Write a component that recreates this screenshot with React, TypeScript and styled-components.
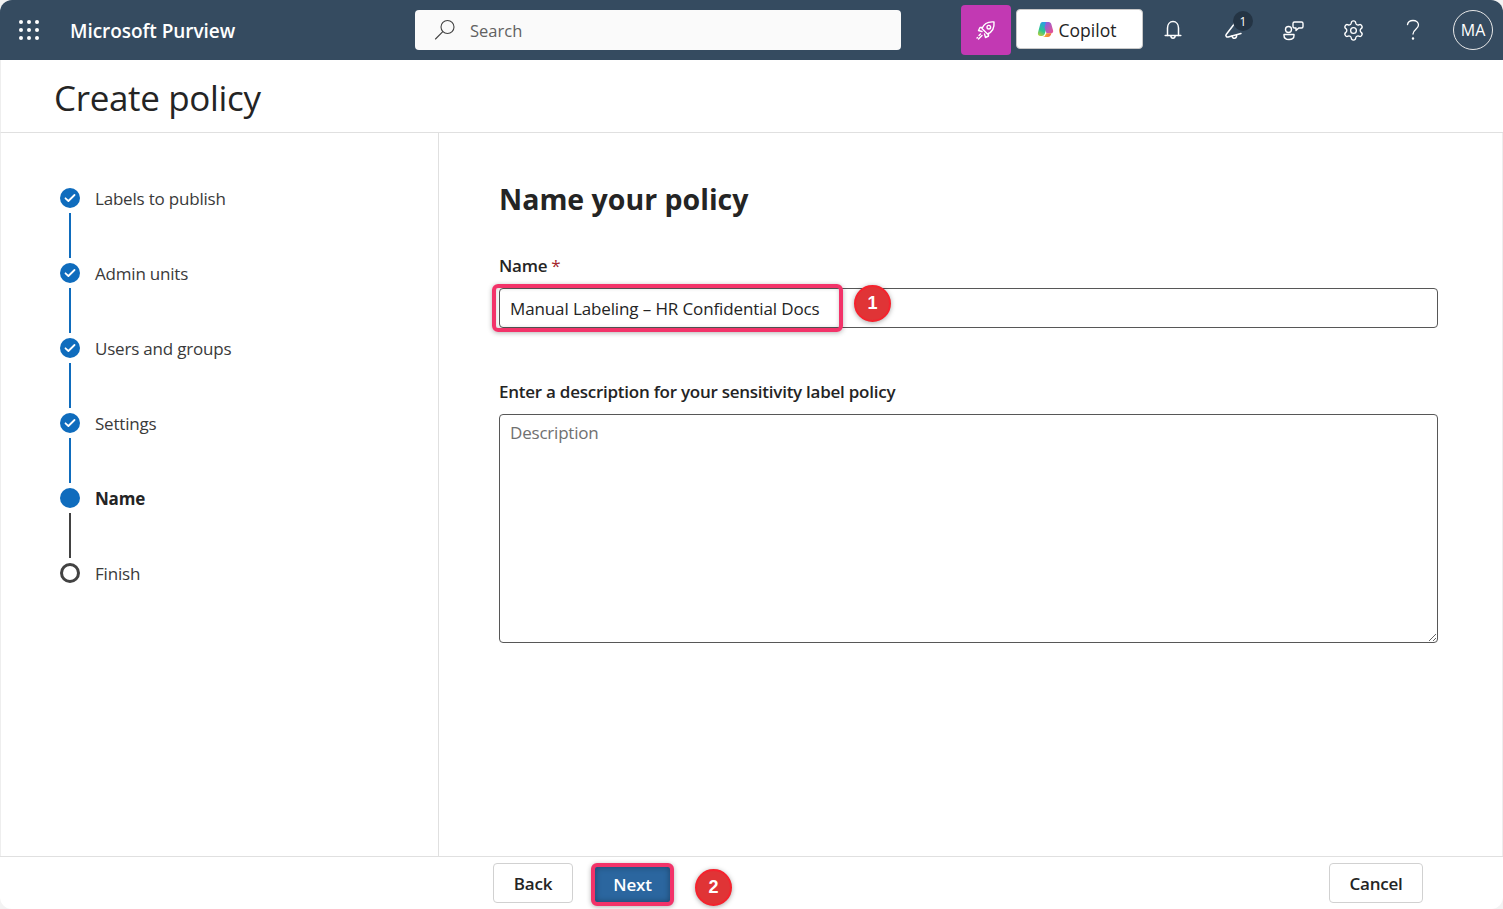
import { ReactNode } from 'react';
import { Settings } from 'lucide-react';
import styled, { createGlobalStyle } from 'styled-components';

const FONT = '"Open Sans", "Noto Sans", "Liberation Sans", sans-serif';

const GlobalStyle = createGlobalStyle`
  html, body {
    margin: 0;
    padding: 0;
    height: 100%;
    background: #f3f3f3;
    overflow: hidden;
  }
  * {
    box-sizing: border-box;
  }
`;

const STEPS = [
  { label: 'Labels to publish', state: 'done' },
  { label: 'Admin units', state: 'done' },
  { label: 'Users and groups', state: 'done' },
  { label: 'Settings', state: 'done' },
  { label: 'Name', state: 'current' },
  { label: 'Finish', state: 'todo' },
] as const;

type StepState = (typeof STEPS)[number]['state'];

const WaffleIcon = () => (
  <svg width="20" height="20" viewBox="0 0 20 20" fill="#fff">
    {[2, 10, 18].map((y) =>
      [2, 10, 18].map((x) => <circle key={`${x}-${y}`} cx={x} cy={y} r="2" />),
    )}
  </svg>
);

const SearchIcon = () => (
  <svg width="22" height="22" viewBox="0 0 22 22" fill="none" stroke="#424242" strokeWidth="1.1">
    <circle cx="13.5" cy="8" r="6.5" />
    <path d="M8.8 12.6 1.5 20" strokeLinecap="round" />
  </svg>
);

const RocketIcon = () => (
  <svg width="20" height="20" viewBox="0 0 20 20" fill="none" stroke="#fff" strokeWidth="1.4" strokeLinecap="round" strokeLinejoin="round">
    <path d="M6 8.500C8 3.500 12.500 1.500 18 2c.5 5.500-1.500 10-6.500 12L6 8.500Z" />
    <circle cx="12.800" cy="7.200" r="1.800" />
    <path d="M6.500 7.500H4L2.500 10.500 6 11.500M12.500 13.500V16l-3 1.500-1-3.500" />
    <path d="M4.500 14 3 15.500M6 15.500 2.500 19M1.500 17.500l-.5.500" />
  </svg>
);

const CopilotIcon = () => (
  <svg width="17" height="17" viewBox="0 0 17 17">
    <defs>
      <linearGradient id="copilotBlue" x1="0.6" y1="0" x2="0.2" y2="1">
        <stop offset="0" stopColor="#2f9bea" />
        <stop offset="0.6" stopColor="#2bc48f" />
        <stop offset="1" stopColor="#b6d13c" />
      </linearGradient>
      <linearGradient id="copilotPink" x1="0" y1="0" x2="1" y2="1">
        <stop offset="0" stopColor="#7a63e8" />
        <stop offset="1" stopColor="#f0508c" />
      </linearGradient>
      <linearGradient id="copilotOrange" x1="0" y1="0" x2="1" y2="0">
        <stop offset="0" stopColor="#f7c531" />
        <stop offset="1" stopColor="#ef6a3c" />
      </linearGradient>
    </defs>
    <path d="M5.500 1h6L8 12c-.5 1.800-1.500 3-3.300 3H3.500C1.500 15 .5 13.500 1 11.500L3 4c.4-1.800 1.200-3 2.500-3Z" fill="url(#copilotBlue)" />
    <path d="M9 1h2.500c1.700 0 2.500 1 3 2.800l1.600 5.700c.4 1.500-.5 2.700-2 2.700H9.500L7.500 6.500 9 1Z" fill="url(#copilotPink)" />
    <path d="M4.500 16h6.300c2 0 3-1.500 3.700-3.800H9.300L7.800 15c-.5.800-1.700 1-3.300 1Z" fill="url(#copilotOrange)" />
  </svg>
);

const BellIcon = () => (
  <svg width="18" height="20" viewBox="0 0 18 20" fill="none" stroke="#fff" strokeWidth="1.5" strokeLinecap="round" strokeLinejoin="round">
    <path d="M3.500 15.500V8c0-3.700 2.300-6.500 5.500-6.500s5.500 2.800 5.500 6.500v7.500" />
    <path d="M1.200 15.500h15.600" />
    <path d="M6.800 15.800c.2 1.500 1 2.400 2.200 2.400s2-.9 2.200-2.400" />
  </svg>
);

const MegaphoneIcon = () => (
  <svg width="19" height="19" viewBox="0 0 19 19" fill="none" stroke="#fff" strokeWidth="1.5" strokeLinecap="round" strokeLinejoin="round">
    <path d="M11 2 2.200 13.500c-.6.800-.4 1.500.2 2.100.5.500 1 .6 1.800.4L17 12.500" />
    <path d="M8 15c.3 1.600 1.400 2.500 2.800 2.200 1.300-.3 2-1.400 1.700-3" />
  </svg>
);

const CommunityIcon = () => (
  <svg width="21" height="21" viewBox="0 0 21 21" fill="none" stroke="#fff" strokeWidth="1.4" strokeLinejoin="round">
    <circle cx="5.500" cy="9.500" r="3" />
    <path d="M1 14.500h10v1c0 2.500-2.200 4-5 4s-5-1.500-5-4v-1Z" />
    <path d="M11.500 2h7c1 0 1.500.6 1.500 1.500v3c0 .9-.5 1.500-1.500 1.500h-2.800L13 10.500V8h-1.500C10.500 8 10 7.400 10 6.500v-3c0-.9.500-1.500 1.500-1.500Z" />
  </svg>
);

const HelpIcon = () => (
  <svg width="16" height="22" viewBox="0 0 16 22" fill="none" stroke="#fff" strokeWidth="1.3" strokeLinecap="round">
    <path d="M2.500 5.500C3 3 5 1.500 8 1.500c3.200 0 5.500 2 5.500 4.500 0 4-5.500 4.500-5.500 9" />
    <circle cx="8" cy="19.500" r="0.6" fill="#fff" />
  </svg>
);

const CheckIcon = () => (
  <svg width="12" height="10" viewBox="0 0 12 10" fill="none" stroke="#fff" strokeWidth="1.8" strokeLinecap="round" strokeLinejoin="round">
    <path d="M1.500 5.300 4.400 8 10.500 2" />
  </svg>
);

const Frame = styled.div`
  width: 1503px;
  height: 909px;
  display: flex;
  flex-direction: column;
  background: #fff;
  border-radius: 12px;
  overflow: hidden;
  font-family: ${FONT};
  color: #242424;
`;

const TopBar = styled.header`
  height: 60px;
  flex: none;
  display: flex;
  align-items: center;
  background: #354b60;
  padding-left: 19px;
`;

const Waffle = styled.div`
  width: 21px;
  display: flex;
`;

const Brand = styled.div`
  margin: 2px 0 0 30px;
  width: 345px;
  font-size: 19px;
  font-weight: 600;
  letter-spacing: -0.05px;
  color: #fff;
`;

const SearchBox = styled.div`
  width: 486px;
  height: 40px;
  display: flex;
  align-items: center;
  gap: 14px;
  padding-left: 19px;
  background: #fafafa;
  border-radius: 4px;
  font-size: 16.5px;
  color: #616161;
`;

const RocketButton = styled.div`
  width: 50px;
  height: 50px;
  margin-left: 60px;
  display: flex;
  align-items: center;
  justify-content: center;
  background: #c239b3;
  border-radius: 4px;
`;

const CopilotButton = styled.div`
  width: 127px;
  height: 40px;
  margin: 0 0 2px 5px;
  padding: 1px 6px 0 0;
  display: flex;
  align-items: center;
  justify-content: center;
  gap: 5px;
  background: #fff;
  border: 1px solid #c8c8c8;
  border-radius: 4px;
  font-size: 17.5px;
  color: #242424;
`;

const IconRow = styled.div`
  display: flex;
  align-items: center;
`;

const IconSlot = styled.div`
  position: relative;
  width: 60px;
  height: 40px;
  display: flex;
  align-items: center;
  justify-content: center;
  color: #fff;
`;

const Badge = styled.span`
  position: absolute;
  top: 1px;
  left: 30px;
  width: 20px;
  height: 20px;
  display: flex;
  align-items: center;
  justify-content: center;
  border-radius: 50%;
  background: #243444;
  font-size: 12px;
  color: #fff;
`;

const Avatar = styled.div`
  width: 40px;
  height: 40px;
  margin-left: 10px;
  display: flex;
  align-items: center;
  justify-content: center;
  border: 1px solid #e8e8e8;
  border-radius: 50%;
  font-size: 16px;
  color: #fff;
`;

const TitleBar = styled.div`
  height: 73px;
  flex: none;
  display: flex;
  align-items: center;
  padding: 2px 0 0 54px;
  border-bottom: 1px solid #e0e0e0;
  border-left: 1px solid #eeeeee;
`;

const Title = styled.h1`
  margin: 0 0 0 -1px;
  font-size: 35px;
  font-weight: 500;
  letter-spacing: -0.35px;
  color: #242424;
`;

const Body = styled.div`
  flex: 1;
  min-height: 0;
  display: flex;
  border-left: 1px solid #eeeeee;
  border-right: 1px solid #eeeeee;
`;

const Sidebar = styled.nav`
  width: 438px;
  flex: none;
  padding: 56px 0 0 59px;
  border-right: 1px solid #e0e0e0;
`;

const StepRow = styled.div<{ $last?: boolean }>`
  height: ${(p) => (p.$last ? '20px' : '75px')};
  display: flex;
  gap: 15px;
`;

const Rail = styled.div`
  width: 20px;
  margin-top: -1px;
  display: flex;
  flex-direction: column;
  align-items: center;
`;

const Dot = styled.div<{ $state: StepState }>`
  width: 20px;
  height: 20px;
  flex: none;
  display: flex;
  align-items: center;
  justify-content: center;
  border-radius: 50%;
  background: ${(p) => (p.$state === 'todo' ? '#fff' : '#0f6cbd')};
  border: ${(p) => (p.$state === 'todo' ? '3px solid #424242' : 'none')};
`;

const Connector = styled.div<{ $dark: boolean }>`
  width: 2px;
  height: 45px;
  margin-top: 5px;
  background: ${(p) => (p.$dark ? '#424242' : '#0f6cbd')};
`;

const StepLabel = styled.span<{ $current: boolean }>`
  font-size: 17px;
  line-height: 20px;
  letter-spacing: -0.2px;
  font-weight: ${(p) => (p.$current ? 700 : 400)};
  color: ${(p) => (p.$current ? '#242424' : '#3a3a3a')};
`;

const Main = styled.main`
  flex: 1;
  padding: 46px 64px 0 60px;
`;

const Heading = styled.h2`
  margin: 0 0 36px;
  font-size: 28.5px;
  line-height: 40px;
  font-weight: 700;
  color: #242424;
`;

const FieldLabel = styled.label`
  display: block;
  margin-bottom: 11px;
  font-size: 17px;
  line-height: 22px;
  font-weight: 600;
  letter-spacing: -0.25px;
  color: #242424;
`;

const Required = styled.span`
  color: #a4262c;
  font-weight: 400;
`;

const InputWrap = styled.div`
  position: relative;
  margin-bottom: 53px;
`;

const NameInput = styled.input`
  display: block;
  width: 100%;
  height: 40px;
  padding: 0 10px;
  border: 1px solid #575757;
  border-radius: 4px;
  background: #fff;
  font-family: ${FONT};
  font-size: 17px;
  letter-spacing: -0.12px;
  color: #242424;
  outline: none;
`;

const Highlight = styled.span`
  position: absolute;
  left: -7px;
  top: -4px;
  width: 351px;
  height: 48px;
  border: 4px solid #f23369;
  border-radius: 6px;
  box-shadow: 0 1px 5px rgba(0, 0, 0, 0.3), inset 0 0 4px rgba(0, 0, 0, 0.2);
  pointer-events: none;
`;

const Marker = styled.span`
  position: absolute;
  width: 37px;
  height: 37px;
  display: flex;
  align-items: center;
  justify-content: center;
  border: 2px solid #f5222d;
  border-radius: 50%;
  background: #e03436;
  box-shadow: 0 1px 5px rgba(0, 0, 0, 0.35);
  font-family: "Liberation Sans", sans-serif;
  font-size: 18px;
  font-weight: 700;
  color: #fff;
`;

const NameMarker = styled(Marker)`
  left: 355px;
  top: -3px;
`;

const DescriptionInput = styled.textarea`
  display: block;
  width: 100%;
  height: 229px;
  padding: 7px 10px;
  border: 1px solid #575757;
  border-radius: 4px;
  background: #fff;
  font-family: ${FONT};
  font-size: 17px;
  line-height: 22px;
  letter-spacing: -0.2px;
  color: #242424;
  outline: none;
  resize: vertical;

  &::placeholder {
    color: #707070;
    opacity: 1;
  }
`;

const Footer = styled.footer`
  height: 53px;
  flex: none;
  display: flex;
  align-items: flex-start;
  padding: 6px 80px 0 493px;
  border-top: 1px solid #e0e0e0;
`;

const FooterButton = styled.button`
  height: 40px;
  padding: 0;
  border: 1px solid #d1d1d1;
  border-radius: 4px;
  background: #fff;
  font-family: ${FONT};
  font-size: 17px;
  font-weight: 600;
  letter-spacing: -0.2px;
  color: #242424;
`;

const BackButton = styled(FooterButton)`
  width: 80px;
`;

const CancelButton = styled(FooterButton)`
  width: 94px;
  margin-left: auto;
`;

const NextWrap = styled.div`
  position: relative;
  margin-left: 18px;
`;

const NextButton = styled(FooterButton)`
  display: block;
  width: 83px;
  height: 43px;
  border: 4px solid #f23369;
  border-radius: 6px;
  background: #2b669f;
  box-shadow: 0 1px 5px rgba(0, 0, 0, 0.3), inset 0 0 6px rgba(0, 0, 0, 0.35);
  color: #fff;
`;

const NextMarker = styled(Marker)`
  left: 104px;
  top: 6px;
`;

const Step = ({ label, state, last }: { label: string; state: StepState; last: boolean }) => (
  <StepRow $last={last}>
    <Rail>
      <Dot $state={state}>{state === 'done' && <CheckIcon />}</Dot>
      {!last && <Connector $dark={state === 'current'} />}
    </Rail>
    <StepLabel $current={state === 'current'}>{label}</StepLabel>
  </StepRow>
);

const NavIcon = ({ children, badge }: { children: ReactNode; badge?: string }) => (
  <IconSlot>
    {children}
    {badge && <Badge>{badge}</Badge>}
  </IconSlot>
);

const App = () => {
  return (
    <>
      <GlobalStyle />
      <Frame>
        <TopBar>
          <Waffle>
            <WaffleIcon />
          </Waffle>
          <Brand>Microsoft Purview</Brand>
          <SearchBox>
            <SearchIcon />
            Search
          </SearchBox>
          <RocketButton>
            <RocketIcon />
          </RocketButton>
          <CopilotButton>
            <CopilotIcon />
            Copilot
          </CopilotButton>
          <IconRow>
            <NavIcon>
              <BellIcon />
            </NavIcon>
            <NavIcon badge="1">
              <MegaphoneIcon />
            </NavIcon>
            <NavIcon>
              <CommunityIcon />
            </NavIcon>
            <NavIcon>
              <Settings size={23} strokeWidth={1.4} />
            </NavIcon>
            <NavIcon>
              <HelpIcon />
            </NavIcon>
          </IconRow>
          <Avatar>MA</Avatar>
        </TopBar>
        <TitleBar>
          <Title>Create policy</Title>
        </TitleBar>
        <Body>
          <Sidebar>
            {STEPS.map((step, index) => (
              <Step key={step.label} label={step.label} state={step.state} last={index === STEPS.length - 1} />
            ))}
          </Sidebar>
          <Main>
            <Heading>Name your policy</Heading>
            <FieldLabel>
              Name <Required>*</Required>
            </FieldLabel>
            <InputWrap>
              <NameInput defaultValue="Manual Labeling – HR Confidential Docs" />
              <Highlight />
              <NameMarker>1</NameMarker>
            </InputWrap>
            <FieldLabel>Enter a description for your sensitivity label policy</FieldLabel>
            <DescriptionInput placeholder="Description" />
          </Main>
        </Body>
        <Footer>
          <BackButton>Back</BackButton>
          <NextWrap>
            <NextButton>Next</NextButton>
            <NextMarker>2</NextMarker>
          </NextWrap>
          <CancelButton>Cancel</CancelButton>
        </Footer>
      </Frame>
    </>
  );
};

export default App;
